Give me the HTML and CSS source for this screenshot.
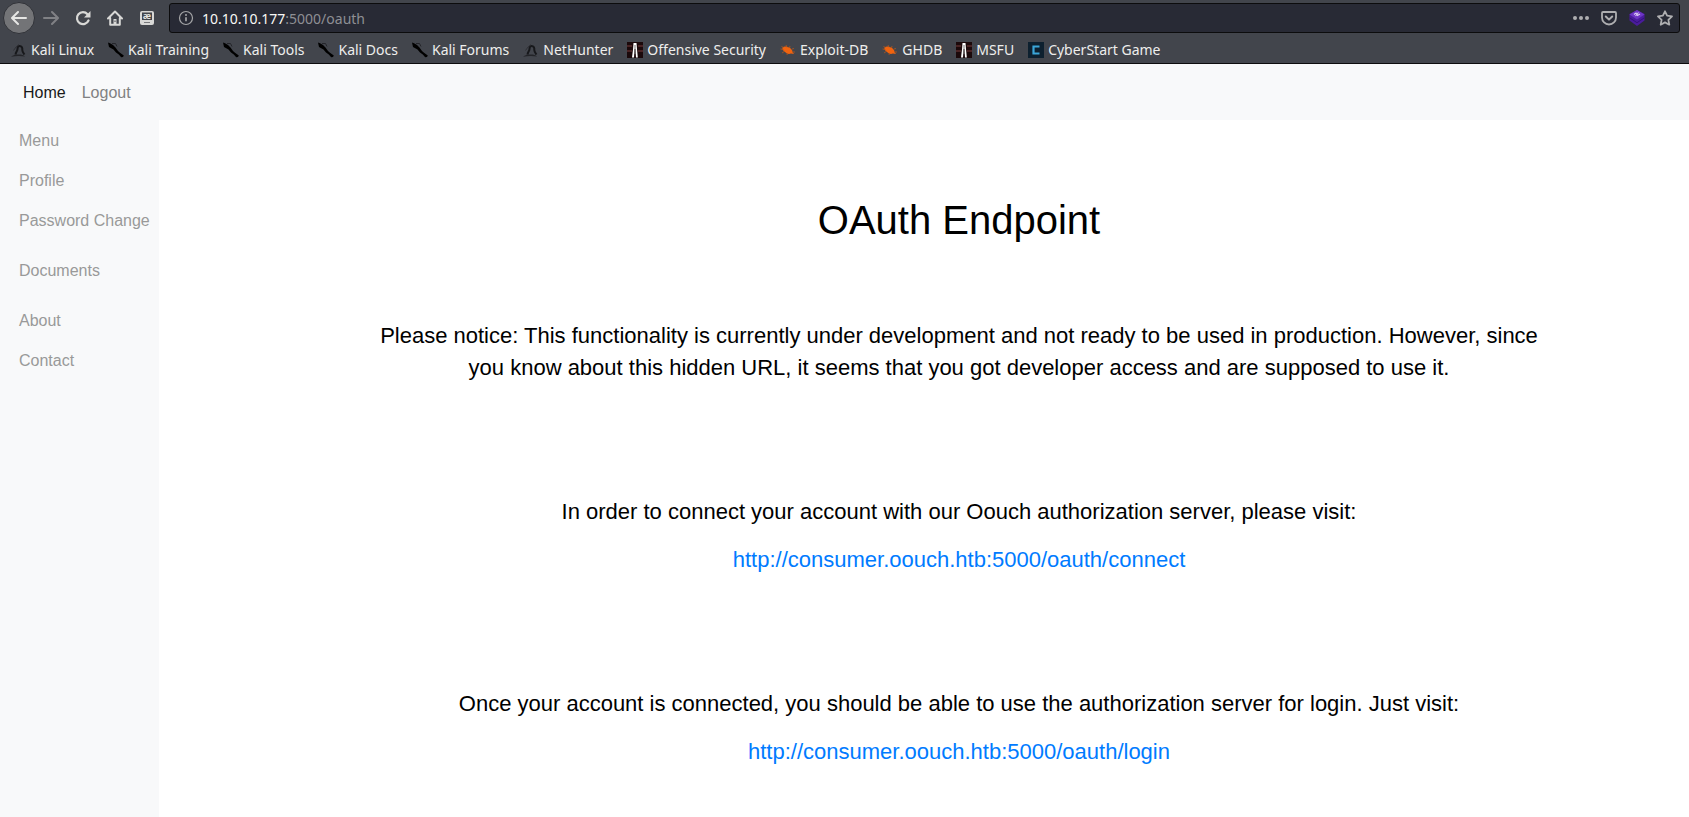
FILE: index.html
```
<!DOCTYPE html>
<html lang="en">
<head>
<meta charset="utf-8">
<title>OAuth Endpoint</title>
<link rel="stylesheet" href="styles.css">
</head>
<body>
<svg class="defs" aria-hidden="true">
  <symbol id="dragon" viewBox="0 0 16 16">
    <path d="M0 14.800c2-1.800 5-2.300 8-2.200 2.500 0 4.500.4 6 2-4-.7-9-.7-14 .2z" fill="#232428"/>
    <path d="M4.500 12.500c.3-2.500 2-3.500 2-5.500 0-1.500.5-3 2-3 2.500 0 3 2 2.800 4 0 2 1 3 2.200 4.500" fill="none" stroke="#17181b" stroke-width="2"/>
    <path d="M2.500 8.500L5 5l3-2.500" fill="none" stroke="#303136" stroke-width="1"/>
  </symbol>
  <symbol id="knife" viewBox="0 0 16 16">
    <path d="M0 .5l2 .8L5 3l2.500 2.500L10 9l2 1.800 3.800 2.700-.8 1.500-1.800.3-2.400-2.700L8 10.500 5.500 7.500 1 5z" fill="#000"/>
    <path d="M4 1.500h3.500l1.500 3" fill="none" stroke="#24252a" stroke-width="1"/>
  </symbol>
  <symbol id="offsec" viewBox="0 0 16 16">
    <path d="M0 0h16v16H0z" fill="#1b090b"/>
    <path d="M0 4h5M0 9h5M11 4h5M11 9h5" stroke="#5a2c2e" stroke-width="1.500"/>
    <path d="M6.500 1h3l.5 6 .8 8.500H9L8.500 7h-1L7 15.500H5l1-8z" fill="#fff"/>
    <path d="M7.500 3h1v9h-1z" fill="#777"/>
  </symbol>
  <symbol id="bug" viewBox="0 0 16 16">
    <path d="M2.500 5.500C4 4 6 4 9 5.500c2 1 3.500 2.500 3.500 4.500l1.500 2-3-.5c-2 1-4 .5-6-1.500C3 8.500 2 7 2.500 5.500z" fill="#f0630f"/>
    <path d="M1.500 4l2 2M6 3l1 2.500M10 4l-.5 2M.5 7l3 .5M2 11l3-2M7 13l.5-2M12 7l2-.5M12 10l3 0" stroke="#b4571d" stroke-width=".8"/>
  </symbol>
  <symbol id="cyber" viewBox="0 0 16 16">
    <path d="M0 0h16v16H0z" fill="#0d202f"/>
    <path d="M11.500 4.500H5.500v7h6" fill="none" stroke="#3ba5d8" stroke-width="2.200"/>
  </symbol>
</svg>

<header class="chrome">
  <div class="toolbar">
    <button class="tool back" aria-label="Back"><svg viewBox="0 0 16 16"><path d="M15 8H1.500M7 2L1 8l6 6" fill="none" stroke="currentColor" stroke-width="2" stroke-linecap="round" stroke-linejoin="round"/></svg></button>
    <button class="tool forward" aria-label="Forward"><svg viewBox="0 0 16 16"><path d="M1 8h13.500M9 2l6 6-6 6" fill="none" stroke="currentColor" stroke-width="2" stroke-linecap="round" stroke-linejoin="round"/></svg></button>
    <button class="tool" aria-label="Reload"><svg viewBox="0 0 16 16"><path d="M12.500 4.200A6 6 0 1 0 13.500 10.500" fill="none" stroke="currentColor" stroke-width="2.200" stroke-linecap="round"/><path d="M15.500 1v6.500H9z" fill="currentColor"/></svg></button>
    <button class="tool" aria-label="Home"><svg viewBox="0 0 16 16"><path d="M1 8.500L8 1.500l7 7M3.200 8v6.700h9.600V8" fill="none" stroke="currentColor" stroke-width="2" stroke-linecap="round" stroke-linejoin="round"/><path d="M6.500 9h3v6h-3z" fill="currentColor"/><path d="M7.500 10.500h1v1.500h-1z" fill="#42454c"/></svg></button>
    <button class="tool" aria-label="Special characters"><svg viewBox="0 0 16 16"><rect x="1" y="1" width="14" height="14" rx="2" fill="currentColor"/><path d="M3 2.500h10v7.500H3z" fill="#42454c"/><text x="8" y="9" class="ae">æ</text><path d="M5 12.500h6" stroke="#77787b" stroke-width="1"/></svg></button>
    <div class="urlbar">
      <svg class="info" viewBox="0 0 16 16"><circle cx="8" cy="8" r="6.500" fill="none" stroke="currentColor" stroke-width="1.200"/><path d="M8 7.200v4" stroke="currentColor" stroke-width="1.700"/><circle cx="8" cy="5" r="1" fill="currentColor"/></svg>
      <div class="address"><span class="host">10.10.10.177</span>:5000/oauth</div>
      <button class="action" aria-label="Page actions"><svg viewBox="0 0 16 16"><g fill="currentColor"><circle cx="2" cy="8" r="2"/><circle cx="8" cy="8" r="2"/><circle cx="14" cy="8" r="2"/></g></svg></button>
      <button class="action" aria-label="Save to Pocket"><svg viewBox="0 0 16 16"><path d="M2 2h12a1 1 0 0 1 1 1v4.500a7 7 0 0 1-14 0V3a1 1 0 0 1 1-1z" fill="none" stroke="currentColor" stroke-width="1.800"/><path d="M4.800 6.500L8 9.600l3.200-3.100" fill="none" stroke="currentColor" stroke-width="2" stroke-linecap="round" stroke-linejoin="round"/></svg></button>
      <button class="action" aria-label="Wappalyzer"><svg viewBox="0 0 16 16"><path d="M8 0l7.500 4v6.500L8 16 .5 10.500V4z" fill="#4a1c9c"/><path d="M8 0l7.500 4.500L8 9.500.5 4.500z" fill="#6d35c4"/><path d="M.5 7.700L8 12.700l7.500-5" fill="none" stroke="#32107a" stroke-width="1"/><path d="M5 4.500l2-1.500 1.500 2.500 2.500-1.500M6.500 6l3-3.500" fill="none" stroke="#dccbf5" stroke-width="1.100"/></svg></button>
      <button class="action" aria-label="Bookmark this page"><svg viewBox="0 0 16 16"><path d="M8 1.300l2.100 4.400 4.900.7-3.600 3.400.9 4.900L8 12.400l-4.300 2.300.9-4.900L1 6.400l4.900-.7z" fill="none" stroke="currentColor" stroke-width="1.800" stroke-linejoin="round"/></svg></button>
    </div>
  </div>
  <nav class="bookmarks" aria-label="Bookmarks">
    <a href="#"><svg><use href="#dragon"/></svg>Kali Linux</a>
    <a href="#"><svg><use href="#knife"/></svg>Kali Training</a>
    <a href="#"><svg><use href="#knife"/></svg>Kali Tools</a>
    <a href="#"><svg><use href="#knife"/></svg>Kali Docs</a>
    <a href="#"><svg><use href="#knife"/></svg>Kali Forums</a>
    <a href="#"><svg><use href="#dragon"/></svg>NetHunter</a>
    <a href="#"><svg><use href="#offsec"/></svg>Offensive Security</a>
    <a href="#"><svg><use href="#bug"/></svg>Exploit-DB</a>
    <a href="#"><svg><use href="#bug"/></svg>GHDB</a>
    <a href="#"><svg><use href="#offsec"/></svg>MSFU</a>
    <a href="#"><svg><use href="#cyber"/></svg>CyberStart Game</a>
  </nav>
</header>

<nav class="navbar" aria-label="Main">
  <a class="active" href="#">Home</a>
  <a href="#">Logout</a>
</nav>

<div class="page">
  <nav class="sidebar" aria-label="Sections">
    <div class="group"><a href="#">Menu</a><a href="#">Profile</a><a href="#">Password Change</a></div>
    <div class="group"><a href="#">Documents</a></div>
    <div class="group"><a href="#">About</a><a href="#">Contact</a></div>
  </nav>
  <main class="content">
    <h1>OAuth Endpoint</h1>
    <section>
      <p>Please notice: This functionality is currently under development and not ready to be used in production. However, since you know about this hidden URL, it seems that you got developer access and are supposed to use it.</p>
    </section>
    <section>
      <p>In order to connect your account with our Oouch authorization server, please visit:</p>
      <p><a href="#">http://consumer.oouch.htb:5000/oauth/connect</a></p>
    </section>
    <section>
      <p>Once your account is connected, you should be able to use the authorization server for login. Just visit:</p>
      <p><a href="#">http://consumer.oouch.htb:5000/oauth/login</a></p>
    </section>
  </main>
</div>
</body>
</html>
```
FILE: styles.css
```
* { box-sizing: border-box; }

body {
  margin: 0;
  min-height: 100vh;
  display: flex;
  flex-direction: column;
  background: #fff;
  color: #000;
  font: 16px/24px "Liberation Sans", Arial, sans-serif;
}

a { text-decoration: none; }

.defs { display: none; }

.chrome {
  background: #42454c;
  border-bottom: 1px solid #0c0c0d;
  color: #eeeeec;
  font-family: "Noto Sans", sans-serif;
  font-size: 14px;
}

.toolbar {
  display: flex;
  align-items: center;
  height: 36px;
  padding: 0 9px 0 3px;
}

.tool,
.action {
  display: grid;
  place-items: center;
  flex: none;
  padding: 0;
  border: 0;
  background: none;
}

.tool { width: 32px; height: 32px; color: #d8d8d6; }
.tool svg { width: 16px; height: 16px; }
.tool.back {
  border: 1px solid #303238;
  border-radius: 50%;
  background: #737477;
  color: #e6e6e4;
}
.tool.forward { color: #808185; }

.ae {
  fill: #e0e0de;
  font: bold 9px "Noto Sans", sans-serif;
  text-anchor: middle;
}

.urlbar {
  flex: 1;
  display: flex;
  align-items: center;
  height: 30px;
  margin-left: 6px;
  padding: 0 0 0 8px;
  border: 1px solid #0c0c0d;
  border-radius: 3px;
  background: #282a35;
  color: #8e8f94;
}

.info { width: 16px; height: 16px; color: #a5a6a8; }
.address { flex: 1; margin-left: 8px; padding-top: 1px; }
.host { color: #f8f8f6; }
.action { width: 28px; height: 28px; color: #aeaeb0; }
.action svg { width: 16px; height: 16px; }

.bookmarks {
  display: flex;
  gap: 14px;
  height: 27px;
  padding: 0 11px;
}
.bookmarks a {
  display: flex;
  align-items: center;
  gap: 4px;
  height: 27px;
  color: inherit;
  white-space: nowrap;
}
.bookmarks svg { width: 16px; height: 16px; }

.navbar {
  display: flex;
  gap: 16px;
  padding: 17px 23px 15px;
  background: #f8f9fa;
}
.navbar a { color: #808182; }
.navbar .active { color: #181919; }

.page { flex: 1; display: flex; }

.sidebar {
  flex: none;
  width: 159px;
  background: #f8f9fa;
}
.group { margin-bottom: 10px; }
.group a {
  display: block;
  padding: 9px 0 7px 19px;
  color: #999;
  white-space: nowrap;
}

.content {
  flex: 1;
  padding: 76px 140px 0 210px;
  font-size: 22px;
  line-height: 32px;
  text-align: center;
}
.content h1 {
  margin: 0 0 76px;
  font-size: 40px;
  font-weight: 400;
  line-height: 48px;
}
.content section { margin-bottom: 112px; }
.content section:last-child { margin-bottom: 0; }
.content p { margin: 0 0 16px; }
.content a { color: #007bff; }
```
